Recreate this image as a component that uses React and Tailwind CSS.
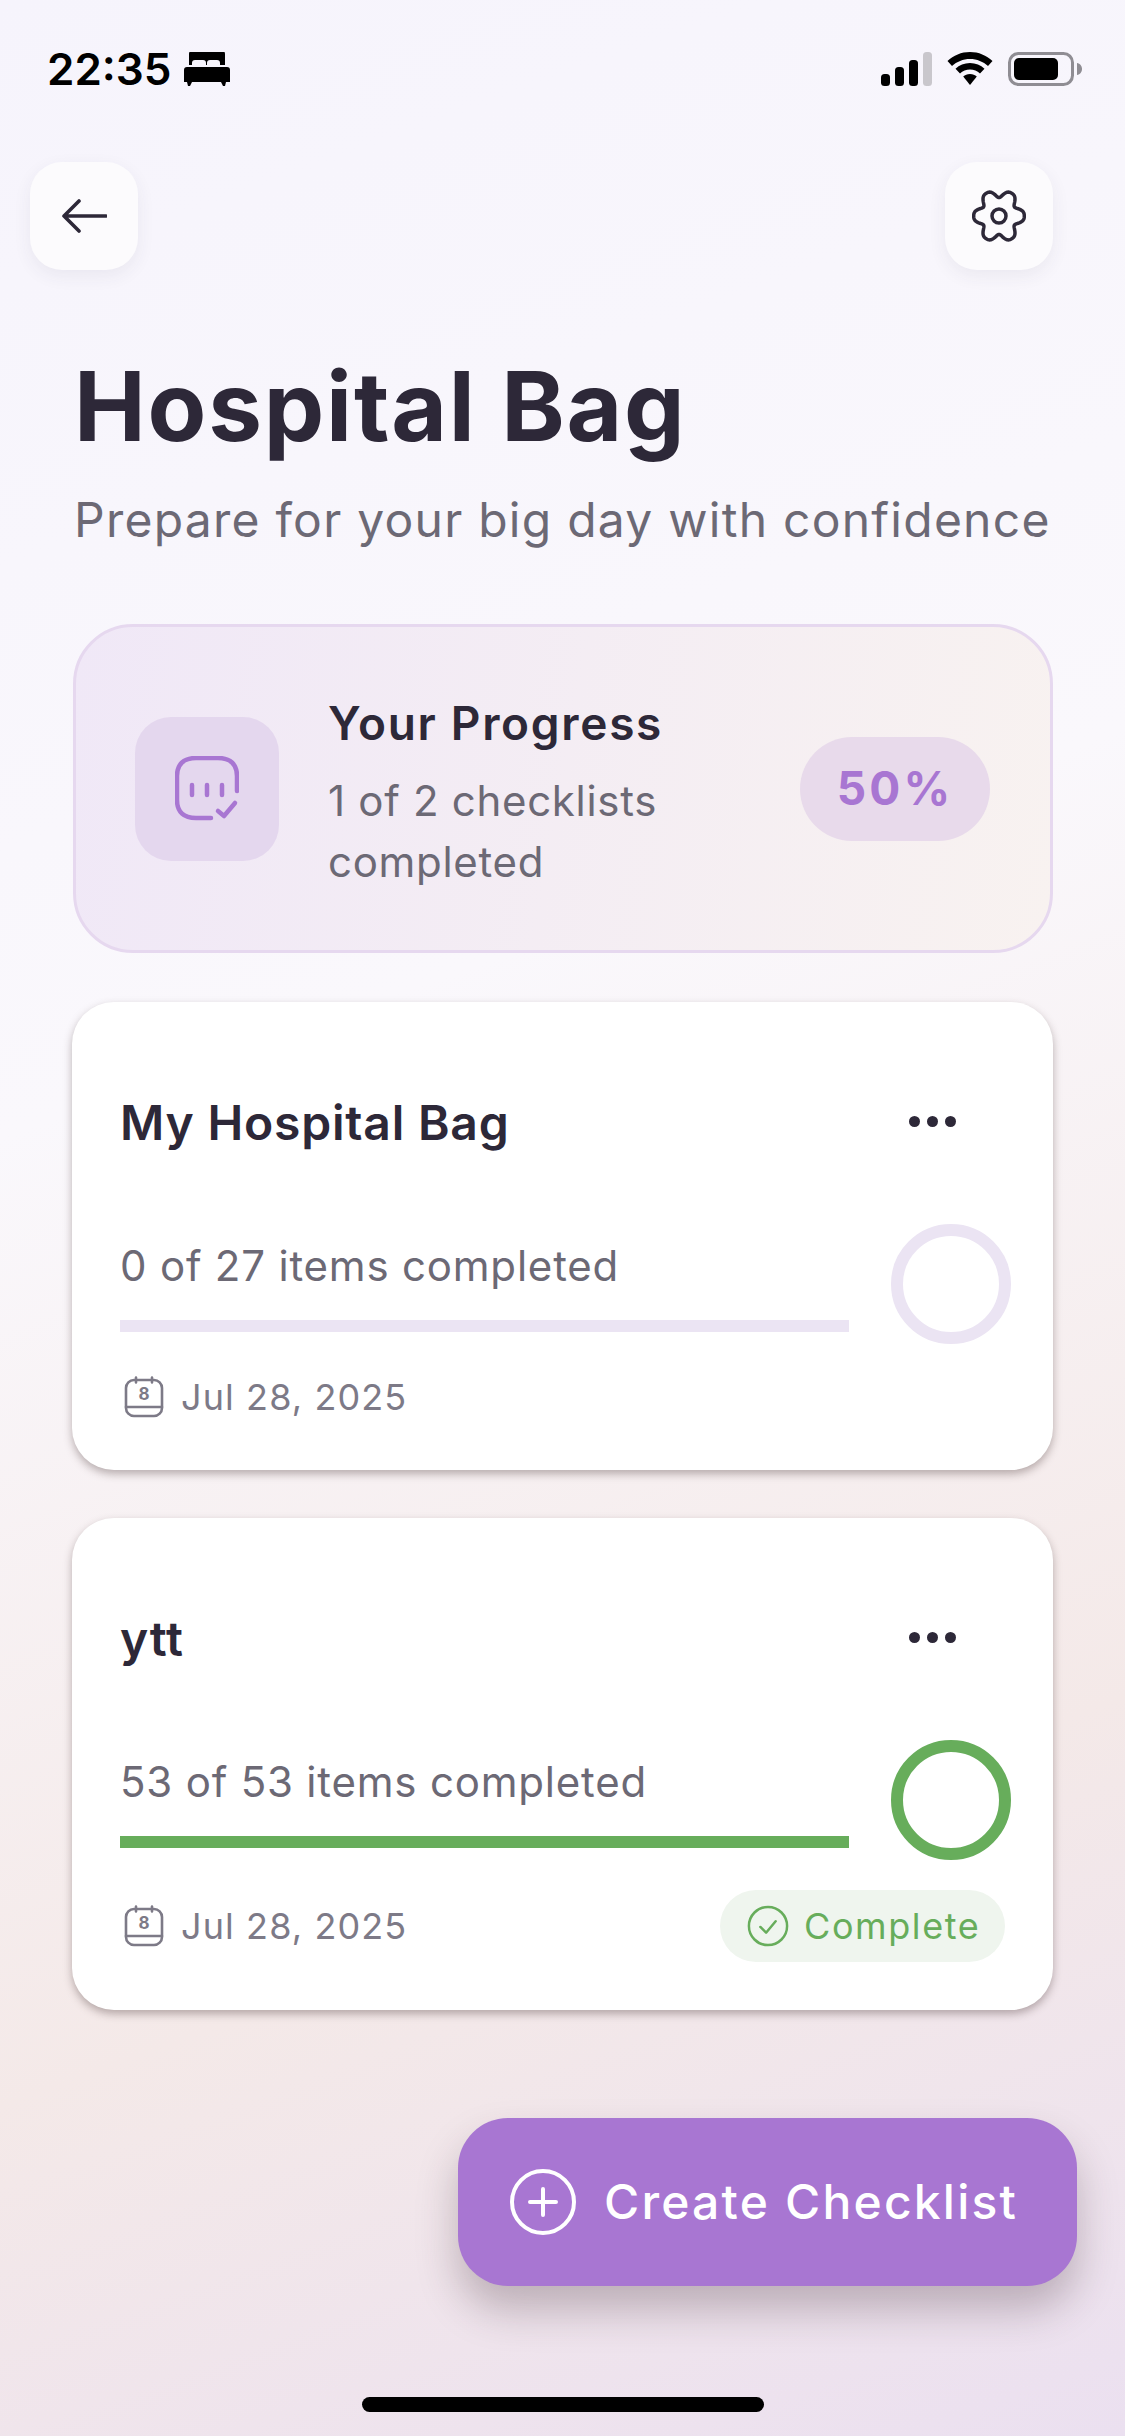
import React from "react";

// six broad lobes with a dent on top, same shape as the settings glyph in the shot
const gearPath = () => {
  const pts = Array.from({ length: 180 }, (_, i) => {
    const t = (i / 180) * Math.PI * 2;
    const c = Math.cos(6 * t);
    const r = 21.5 + 3.8 * (1 - 2 * Math.pow((1 - c) / 2, 1.5));
    return `${(27 + r * Math.cos(t)).toFixed(2)} ${(27 + 1.04 * r * Math.sin(t)).toFixed(2)}`;
  });
  return `M${pts.join("L")}Z`;
};

const CalendarIcon = () => (
  <svg width="42" height="42" viewBox="0 0 42 42" fill="none" stroke="#7d7a87" strokeWidth="2.6" strokeLinecap="round" strokeLinejoin="round">
    <rect x="3" y="4" width="36" height="36" rx="8" />
    <path d="M3 31h36M13 1.5v5M29 1.5v5" />
    <text x="21" y="24" textAnchor="middle" fontSize="17" fontWeight="700" fill="#7d7a87" stroke="none" fontFamily="Inter">8</text>
  </svg>
);

const Dots = () => (
  <div className="-mt-[3px] flex gap-[7px]">
    <span className="h-[11px] w-[11px] rounded-full bg-[#2d2838]" />
    <span className="h-[11px] w-[11px] rounded-full bg-[#2d2838]" />
    <span className="h-[11px] w-[11px] rounded-full bg-[#2d2838]" />
  </div>
);

const ChecklistCard = ({ title, progress, done, size }) => (
  <div className={`flex flex-col rounded-[42px] bg-white pl-[48px] pr-[42px] pt-[87px] shadow-[0_4px_8px_rgba(70,50,50,0.36)] ${size}`}>
    <div className="flex items-center justify-between pr-[55px]">
      <h3 className="text-[48px] font-semibold leading-[68px] tracking-[0.8px] text-[#2d2838]">{title}</h3>
      <Dots />
    </div>
    <div className="mt-[67px] flex items-start gap-[42px]">
      <div className="w-[729px] pt-[12px]">
        <p className="text-[42px] leading-[60px] tracking-[0.8px] text-[#6c6975]">{progress}</p>
        <div className={`mt-[24px] h-[12px] ${done ? "bg-[#67ad5b]" : "bg-[#ebe4f3]"}`} />
      </div>
      <div className={`h-[120px] w-[120px] rounded-full border-[12px] ${done ? "border-[#67ad5b]" : "border-[#ebe4f3]"}`} />
    </div>
    <div className="mt-auto flex items-center justify-between pr-[6px]">
      <div className="flex items-center gap-[16px] pl-[3px]">
        <CalendarIcon />
        <span className="text-[36px] tracking-[1.1px] text-[#7d7a87]">Jul 28, 2025</span>
      </div>
      {done && (
        <div className="flex h-[72px] w-[285px] items-center gap-[15px] rounded-full bg-[#eff5ee] pl-[27px]">
          <svg width="42" height="42" viewBox="0 0 44 44" fill="none" stroke="#67ad5b" strokeWidth="2.6" strokeLinecap="round" strokeLinejoin="round">
            <circle cx="22" cy="22" r="20" />
            <path d="M14 23l6 6 10-12" />
          </svg>
          <span className="text-[36px] tracking-[1.6px] text-[#67ad5b]">Complete</span>
        </div>
      )}
    </div>
  </div>
);

export default function App() {
  return (
    <div className="relative h-[2436px] w-[1125px] overflow-hidden bg-[linear-gradient(160deg,#f6f4fc_0%,#faf8fc_40%,#f4e9e8_74%,#ebe0f0_100%)] font-['Inter',sans-serif]">
      {/* status bar */}
      <div className="flex h-[162px] items-start justify-between pl-[47px] pr-[43px] pt-[44px]">
        <div className="flex items-center gap-[12px]">
          <span className="text-[44px] font-semibold leading-[50px] text-black">22:35</span>
          <svg width="46" height="34" viewBox="0 0 46 34" fill="black">
            <path d="M5 2a3 3 0 0 1 3-3h30a3 3 0 0 1 3 3v11h-5v-2a3 3 0 0 0-3-3h-7a3 3 0 0 0-3 3v2h-1v-2a3 3 0 0 0-3-3h-8a3 3 0 0 0-3 3v2H5z" />
            <path d="M3 15h40a3 3 0 0 1 3 3v12h-4l-1 4h-2l-2-4H8l-2 4H4l-1-4H0V18a3 3 0 0 1 3-3z" />
          </svg>
        </div>
        <div className="flex items-center gap-[15px] pt-[8px]">
          <svg width="51" height="34" viewBox="0 0 51 34">
            <rect x="0" y="22" width="9" height="12" rx="3.5" fill="black" />
            <rect x="14" y="15" width="9" height="19" rx="3.5" fill="black" />
            <rect x="28" y="8" width="9" height="26" rx="3.5" fill="black" />
            <rect x="42" y="0" width="9" height="34" rx="3.5" fill="#c9c7cc" />
          </svg>
          <svg width="46" height="34" viewBox="0 0 46 34" fill="black">
            <path d="M23 0c8.700 0 16.500 3.400 22.500 9L41 14c-4.800-4.300-11-7-18-7S9.800 9.700 5 14L.5 9C6.500 3.400 14.300 0 23 0z" />
            <path d="M23 11c5.700 0 10.700 2.200 14.500 5.700L33 21.500c-2.700-2.400-6.200-3.900-10-3.900s-7.300 1.500-10 3.900l-4.500-4.800C12.300 13.200 17.300 11 23 11z" />
            <path d="M23 22c2.800 0 5 1 6.800 2.600L23 33l-6.800-8.400C18 23 20.200 22 23 22z" />
          </svg>
          <svg width="74" height="34" viewBox="0 0 74 34">
            <rect x="1.500" y="1.500" width="63" height="31" rx="9" fill="none" stroke="#8f8d93" strokeWidth="3" />
            <rect x="6" y="6" width="44" height="22" rx="5" fill="black" />
            <path d="M69 11c3 .5 5 3 5 6s-2 5.500-5 6z" fill="#8f8d93" />
          </svg>
        </div>
      </div>

      <div className="px-[30px]">
        {/* top buttons */}
        <div className="flex w-[1023px] justify-between">
          <button className="flex h-[108px] w-[108px] items-center justify-center rounded-[32px] bg-[#fcfbfd] shadow-[0_6px_18px_rgba(60,50,80,0.07)]">
            <svg width="46" height="34" viewBox="0 0 46 34" fill="none" stroke="#2d2838" strokeWidth="3.600" strokeLinecap="round" strokeLinejoin="round">
              <path d="M45 17H3M18 2L3 17 18 32" />
            </svg>
          </button>
          <button className="flex h-[108px] w-[108px] items-center justify-center rounded-[32px] bg-[#fcfbfd] shadow-[0_6px_18px_rgba(60,50,80,0.07)]">
            <svg width="54" height="54" viewBox="0 0 54 54" fill="none" stroke="#2d2838" strokeWidth="3.500" strokeLinejoin="round">
              <path d={gearPath()} />
              <circle cx="27" cy="27" r="7" />
            </svg>
          </button>
        </div>

        <div className="pl-[44px] pt-[84px]">
          <h1 className="text-[96px] font-bold leading-[104px] tracking-[1.8px] text-[#2d2838]">Hospital Bag</h1>
          <p className="mt-[32px] whitespace-nowrap text-[48px] leading-[60px] tracking-[1.25px] text-[#6c6975]">Prepare for your big day with confidence</p>
        </div>

        {/* progress */}
        <div className="ml-[43px] mt-[74px] flex h-[329px] w-[980px] items-center rounded-[60px] border-[3px] border-[#e6d8ef] bg-[linear-gradient(100deg,#f0e8f7_0%,#f8f2f0_100%)] pl-[59px] pr-[60px]">
          <div className="flex h-[144px] w-[144px] shrink-0 items-center justify-center rounded-[36px] bg-[#e4d7ee]">
            <svg width="64" height="66" viewBox="0 0 64 66" fill="none" stroke="#a876d2" strokeWidth="4.500" strokeLinecap="round" strokeLinejoin="round">
              <path d="M62 35V20C62 8 55 2 43 2H21C9 2 2 8 2 20v24c0 12 7 18 19 18h15" />
              <path d="M17 29v10M32 29v10M47 29v10" />
              <path d="M43 55l6 5 11-13" />
            </svg>
          </div>
          <div className="ml-[49px] flex-1 pt-[6px]">
            <h2 className="text-[46px] font-semibold leading-[62px] tracking-[1.7px] text-[#2d2838]">Your Progress</h2>
            <p className="mt-[16px] w-[380px] text-[42px] leading-[61px] tracking-[0.7px] text-[#6c6975]">1 of 2 checklists completed</p>
          </div>
          <div className="flex h-[104px] w-[190px] items-center justify-center rounded-full bg-[#e8daeb] text-[46px] font-bold tracking-[3.2px] text-[#a876d2]">50%</div>
        </div>

        {/* checklists */}
        <div className="ml-[42px] mt-[49px] flex w-[981px] flex-col gap-[48px]">
          <ChecklistCard title="My Hospital Bag" progress="0 of 27 items completed" size="h-[468px] pb-[46px]" />
          <ChecklistCard title="ytt" progress="53 of 53 items completed" done size="h-[492px] pb-[48px]" />
        </div>
      </div>

      {/* floating button */}
      <button className="absolute left-[458px] top-[2118px] flex h-[168px] w-[619px] items-center gap-[28px] rounded-[50px] bg-[#a876d2] pl-[52px] shadow-[0_24px_40px_rgba(60,40,50,0.28)]">
        <svg width="66" height="66" viewBox="0 0 66 66" fill="none" stroke="white" strokeWidth="4" strokeLinecap="round">
          <circle cx="33" cy="33" r="31" />
          <path d="M33 20v26M20 33h26" />
        </svg>
        <span className="text-[48px] font-medium tracking-[2.2px] text-white">Create Checklist</span>
      </button>

      {/* home indicator */}
      <div className="absolute bottom-[24px] left-[362px] h-[15px] w-[402px] rounded-full bg-black" />
    </div>
  );
}
